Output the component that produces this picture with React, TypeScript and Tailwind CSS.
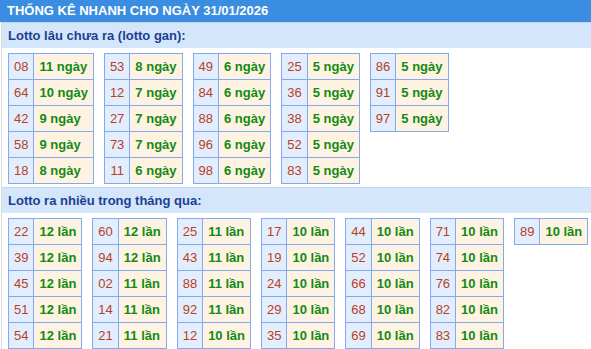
const ganRows: [string, string][][] = [
  [['08', '11 ngày'], ['64', '10 ngày'], ['42', '9 ngày'], ['58', '9 ngày'], ['18', '8 ngày']],
  [['53', '8 ngày'], ['12', '7 ngày'], ['27', '7 ngày'], ['73', '7 ngày'], ['11', '6 ngày']],
  [['49', '6 ngày'], ['84', '6 ngày'], ['88', '6 ngày'], ['96', '6 ngày'], ['98', '6 ngày']],
  [['25', '5 ngày'], ['36', '5 ngày'], ['38', '5 ngày'], ['52', '5 ngày'], ['83', '5 ngày']],
  [['86', '5 ngày'], ['91', '5 ngày'], ['97', '5 ngày']],
]

const hotRows: [string, string][][] = [
  [['22', '12 lần'], ['39', '12 lần'], ['45', '12 lần'], ['51', '12 lần'], ['54', '12 lần']],
  [['60', '12 lần'], ['94', '12 lần'], ['02', '11 lần'], ['14', '11 lần'], ['21', '11 lần']],
  [['25', '11 lần'], ['43', '11 lần'], ['88', '11 lần'], ['92', '11 lần'], ['12', '10 lần']],
  [['17', '10 lần'], ['19', '10 lần'], ['24', '10 lần'], ['29', '10 lần'], ['35', '10 lần']],
  [['44', '10 lần'], ['52', '10 lần'], ['66', '10 lần'], ['68', '10 lần'], ['69', '10 lần']],
  [['71', '10 lần'], ['74', '10 lần'], ['76', '10 lần'], ['82', '10 lần'], ['83', '10 lần']],
  [['89', '10 lần']],
]

const StatTable = ({ rows }: { rows: [string, string][] }) => (
  <table className="border-collapse">
    <tbody>
      {rows.map(([num, val]) => (
        <tr key={num}>
          <td className="border border-[#82aaf0] bg-[#e2eefd] px-[5px] py-[5px] text-center leading-[15px] text-[#b8401f]">
            {num}
          </td>
          <td className="border border-[#82aaf0] bg-[#fef3e2] px-[5px] py-[5px] text-left font-bold leading-[15px] whitespace-nowrap text-[#138a13]">
            {val}
          </td>
        </tr>
      ))}
    </tbody>
  </table>
)

const Section = ({ title, tables }: { title: string; tables: [string, string][][] }) => (
  <div className="ml-px border-l border-b border-[#dcdcdc]">
    <div className="h-[26px] border-t border-[#c5d6ea] bg-[#d3e6fb] pl-[6px] text-[13px] leading-[25px] font-bold text-[#1c3f92]">
      {title}
    </div>
    <div className="flex items-start gap-x-[10px] pl-[6px] pt-[5px] pb-[3px]">
      {tables.map((rows, i) => (
        <StatTable key={i} rows={rows} />
      ))}
    </div>
  </div>
)

export default function App() {
  return (
    <div className="h-[349px] w-[591px] overflow-hidden bg-white text-[13px] font-['Liberation_Sans',Arial,sans-serif]">
      <div className="h-[22px] bg-[#3a8de0] pl-[7px] text-[13px] leading-[22px] font-bold text-white">
        THỐNG KÊ NHANH CHO NGÀY 31/01/2026
      </div>
      <Section title="Lotto lâu chưa ra (lotto gan):" tables={ganRows} />
      <div className="-mt-px">
        <Section title="Lotto ra nhiều trong tháng qua:" tables={hotRows} />
      </div>
    </div>
  )
}
